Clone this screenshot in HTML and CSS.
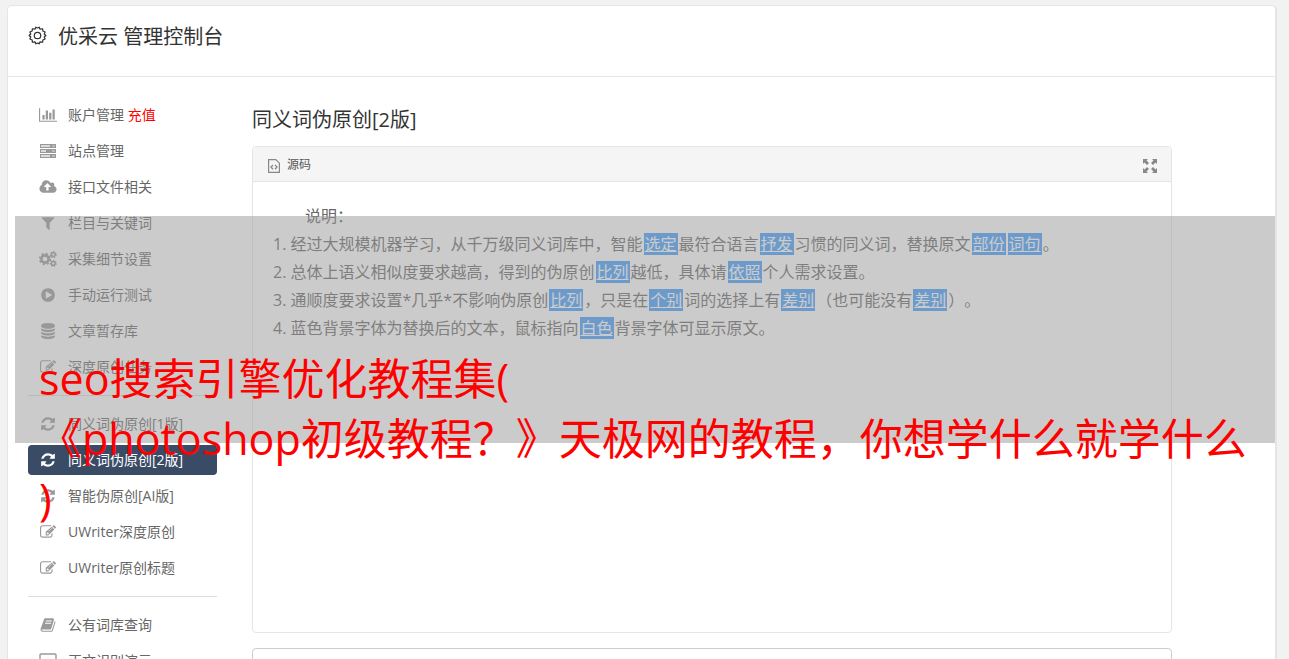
FILE: index.html
```html
<!DOCTYPE html>
<html lang="zh-CN">
<head>
    <meta charset="UTF-8">
    <meta name="viewport" content="width=device-width, initial-scale=1.0">
    <title>优采云 管理控制台</title>
    <link rel="stylesheet" href="styles.css">
</head>
<body>
    <!-- Icon set -->
    <svg class="icon-defs" width="0" height="0" aria-hidden="true">
        <symbol id="i-chart" viewBox="0 0 2048 1792"><path d="M640 896v512H384V896h256zm384-512v1024H768V384h256zm1024 1152v128H0V128h128v1408h1920zm-640-896v768h-256V640h256zm384-384v1152h-256V256h256z"/></symbol>
        <symbol id="i-server" viewBox="0 0 18 16"><path opacity=".35" d="M1 2h16v3H1zM1 6h16v4H1zM1 11h16v3H1z"/><path fill-rule="evenodd" d="M1 1h16v4H1zM2 2v2h9V2zM13 2.500v1h3v-1zM1 6h16v4H1zM2 7v2h5V7zM13 7.500v1h3v-1zM1 11h16v4H1zM2 12v2h9v-2zM13 12.500v1h3v-1z"/></symbol>
        <symbol id="i-cloud" viewBox="0 0 1920 1792"><path d="M1280 864q0-14-9-23L919 489q-9-9-23-9t-23 9L522 840q-10 12-10 24 0 14 9 23t23 9h224v352q0 13 9.500 22.500T800 1280h192q13 0 22.500-9.500t9.500-22.500V896h224q13 0 22.500-9.500T1280 864zm640 288q0 159-112.500 271.500T1536 1536H448q-185 0-316.500-131.500T0 1088q0-130 70-240t188-165q-2-30-2-43 0-212 150-362t362-150q156 0 285.500 87T1242 446q71-62 166-62 106 0 181 75t75 181q0 76-41 138 130 31 213.500 135.500T1920 1152z"/></symbol>
        <symbol id="i-filter" viewBox="0 0 1792 1792"><path d="M1595 295q17 41-14 70l-493 493v742q0 42-39 59-13 5-25 5-27 0-45-19l-256-256q-19-19-19-45V858L211 365q-31-29-14-70 17-39 59-39h1280q42 0 59 39z"/></symbol>
        <symbol id="i-cogs" viewBox="0 0 18 16"><g fill="none" stroke="currentColor"><circle cx="6" cy="8" r="3.600" stroke-width="2.600"/><circle cx="6" cy="8" r="5.300" stroke-width="1.800" stroke-dasharray="2.080 2.080"/><circle cx="14.300" cy="3.600" r="1.900" stroke-width="1.500"/><circle cx="14.300" cy="3.600" r="2.900" stroke-width="1.200" stroke-dasharray="1.300 1.300"/><circle cx="14.300" cy="12.400" r="1.900" stroke-width="1.500"/><circle cx="14.300" cy="12.400" r="2.900" stroke-width="1.200" stroke-dasharray="1.300 1.300"/></g></symbol>
        <symbol id="i-play" viewBox="0 0 1792 1792"><path d="M896 128q209 0 385.500 103T1561 510.500 1664 896t-103 385.500-279.500 279.500T896 1664t-385.500-103T231 1281.500 128 896t103-385.500T510.500 231 896 128zm384 823q32-18 32-55t-32-55L736 521q-31-19-64-1-32 19-32 56v640q0 37 32 56 16 8 32 8 17 0 32-9z"/></symbol>
        <symbol id="i-database" viewBox="0 0 1792 1792"><path d="M896 768q237 0 443-43t325-127v170q0 69-103 128t-280 93.500-385 34.500-385-34.500T231 896 128 768V598q119 84 325 127t443 43zm0 768q237 0 443-43t325-127v170q0 69-103 128t-280 93.500-385 34.500-385-34.500-280-93.500-103-128v-170q119 84 325 127t443 43zm0-384q237 0 443-43t325-127v170q0 69-103 128t-280 93.500-385 34.500-385-34.500-280-93.500-103-128V982q119 84 325 127t443 43zM896 0q208 0 385 34.500t280 93.500 103 128v128q0 69-103 128t-280 93.500T896 640t-385-34.500T231 512 128 384V256q0-69 103-128t280-93.500T896 0z"/></symbol>
        <symbol id="i-edit" viewBox="0 0 1792 1792"><path d="M888 1184l116-116-152-152-116 116v56h96v96h56zm440-720q-16-16-33 1L945 815q-17 17-1 33t33-1l350-350q17-17 1-33zm80 594v190q0 119-84.500 203.500T1120 1536H288q-119 0-203.500-84.500T0 1248V416q0-119 84.500-203.500T288 128h832q63 0 117 25 15 7 18 23 3 17-9 29l-49 49q-14 14-32 8-23-6-45-6H288q-66 0-113 47t-47 113v832q0 66 47 113t113 47h832q66 0 113-47t47-113v-126q0-13 9-22l64-64q15-15 35-7t20 29zm-96-738l288 288-672 672H640V864zm444 132l-92 92-288-288 92-92q28-28 68-28t68 28l152 152q28 28 28 68t-28 68z"/></symbol>
        <symbol id="i-refresh" viewBox="0 0 1792 1792"><path d="M1639 1056q0 5-1 7-64 268-268 434.500T892 1664q-146 0-282.500-55T366 1452l-129 129q-19 19-45 19t-45-19-19-45v-448q0-26 19-45t45-19h448q26 0 45 19t19 45-19 45l-137 137q71 66 161 102t187 36q134 0 250-65t186-179q11-17 53-117 8-23 30-23h192q13 0 22.500 9.500t9.500 22.500zm25-800v448q0 26-19 45t-45 19h-448q-26 0-45-19t-19-45 19-45l138-138Q1097 384 896 384q-134 0-250 65T460 628q-11 17-53 117-8 23-30 23H178q-13 0-22.500-9.500T146 736v-7q65-268 270-434.500T896 128q146 0 284 55.500T1425 340l130-129q19-19 45-19t45 19 19 45z"/></symbol>
        <symbol id="i-book" viewBox="0 0 1792 1792"><path d="M1703 478q40 57 18 129l-275 906q-19 64-76.500 107.500T1247 1664H324q-77 0-148.500-53.500T76 1479q-24-67-2-127 0-4 3-27t4-37q1-8-3-21.500t-3-19.500q2-11 8-21t16.500-23.500T116 1179q23-38 45-91.500t30-91.500q3-10 .5-30t-.5-28q3-11 17-28t17-23q21-36 42-92t25-90q1-9-2.500-32t.5-28q4-13 22-30.500t22-22.500q19-26 42.500-84.500T404 411q1-8-3-25.500t-2-26.500q2-8 9-18t18-23 17-21q8-12 16.500-30.500t15-35 16-36 19.500-32T533.500 140t36-11.500T617 134l-1 3q38-9 51-9h761q74 0 114 56t18 130l-274 906q-36 119-71.500 153.500T1086 1408H217q-27 0-38 15-11 16-1 43 24 70 144 70h923q29 0 56-15.500t35-41.500l300-987q7-22 5-57 38 15 59 43zm-1064 2q-4 13 2 22.500t20 9.500h608q13 0 25.500-9.500T1311 480l21-64q4-13-2-22.500t-20-9.500H702q-13 0-25.500 9.500T660 416zm-83 256q-4 13 2 22.500t20 9.500h608q13 0 25.500-9.500T1228 736l21-64q4-13-2-22.500t-20-9.500H619q-13 0-25.500 9.500T577 672z"/></symbol>
        <symbol id="i-screen" viewBox="0 0 18 16"><path fill="none" stroke="currentColor" stroke-width="1.400" d="M2 1h14q1 0 1 1v9q0 1-1 1H2q-1 0-1-1V2q0-1 1-1zM5 15h8"/></symbol>
        <symbol id="i-gear" viewBox="0 0 20 20"><g fill="none" stroke="currentColor" stroke-width="1.300" stroke-linejoin="round"><path d="M8.200 1.200Q10 2.600 11.800 1.200L12.700 3.300 15.400 2.900 15.600 5.200 18 6.300 17.100 8.400 18.800 10 17.100 11.600 18 13.700 15.600 14.800 15.400 17.100 12.700 16.700 11.800 18.800Q10 17.400 8.200 18.800L7.300 16.700 4.600 17.100 4.400 14.800 2 13.700 2.900 11.600 1.200 10 2.900 8.400 2 6.300 4.400 5.200 4.600 2.900 7.300 3.300z"/><circle cx="10" cy="10" r="3.400"/></g></symbol>
        <symbol id="i-source" viewBox="0 0 12 14"><g fill="none" stroke="currentColor"><path stroke-width="1.200" d="M.6.6h7.200l3.600 3.600v9.200H.6z"/><path stroke-width="1.300" d="M5 6L3 8l2 2.200M7 6l2 2-2 2.200"/></g></symbol>
        <symbol id="i-expand" viewBox="0 0 14 14"><path d="M0 0h5L3.500 1.500 6 4 4 6 1.500 3.500 0 5zM14 0v5l-1.500-1.500L10 6 8 4l2.500-2.500L9 0zM0 14V9l1.500 1.500L4 8l2 2-2.500 2.500L5 14zM14 14H9l1.500-1.500L8 10l2-2 2.500 2.500L14 9z"/></symbol>
    </svg>

    <div class="panel">
        <header class="panel-header">
            <svg class="gear"><use href="#i-gear"/></svg>
            <h1>优采云 管理控制台</h1>
        </header>

        <div class="panel-body">
            <nav class="sidebar">
                <a class="nav-item" href="#"><svg class="icon"><use href="#i-chart"/></svg><span>账户管理 <em class="recharge">充值</em></span></a>
                <a class="nav-item" href="#"><svg class="icon"><use href="#i-server"/></svg><span>站点管理</span></a>
                <a class="nav-item" href="#"><svg class="icon"><use href="#i-cloud"/></svg><span>接口文件相关</span></a>
                <a class="nav-item" href="#"><svg class="icon"><use href="#i-filter"/></svg><span>栏目与关键词</span></a>
                <a class="nav-item" href="#"><svg class="icon"><use href="#i-cogs"/></svg><span>采集细节设置</span></a>
                <a class="nav-item" href="#"><svg class="icon"><use href="#i-play"/></svg><span>手动运行测试</span></a>
                <a class="nav-item" href="#"><svg class="icon"><use href="#i-database"/></svg><span>文章暂存库</span></a>
                <a class="nav-item" href="#"><svg class="icon"><use href="#i-edit"/></svg><span>深度原创任务</span></a>
                <hr>
                <a class="nav-item" href="#"><svg class="icon"><use href="#i-refresh"/></svg><span>同义词伪原创[1版]</span></a>
                <a class="nav-item active" href="#"><svg class="icon"><use href="#i-refresh"/></svg><span>同义词伪原创[2版]</span></a>
                <a class="nav-item" href="#"><svg class="icon"><use href="#i-refresh"/></svg><span>智能伪原创[AI版]</span></a>
                <a class="nav-item" href="#"><svg class="icon"><use href="#i-edit"/></svg><span>UWriter深度原创</span></a>
                <a class="nav-item" href="#"><svg class="icon"><use href="#i-edit"/></svg><span>UWriter原创标题</span></a>
                <hr>
                <a class="nav-item" href="#"><svg class="icon"><use href="#i-book"/></svg><span>公有词库查询</span></a>
                <a class="nav-item" href="#"><svg class="icon"><use href="#i-screen"/></svg><span>正文识别演示</span></a>
            </nav>

            <main class="content">
                <h2>同义词伪原创[2版]</h2>

                <section class="editor">
                    <div class="toolbar">
                        <button type="button" class="tool"><svg class="source-icon"><use href="#i-source"/></svg>源码</button>
                        <button type="button" class="tool" aria-label="全屏"><svg class="expand-icon"><use href="#i-expand"/></svg></button>
                    </div>
                    <div class="editor-body">
                        <p>说明：</p>
                        <ol>
                            <li>经过大规模机器学习，从千万级同义词库中，智能<u>选定</u>最符合语言<u>抒发</u>习惯的同义词，替换原文<u>部份</u><u>词句</u>。</li>
                            <li>总体上语义相似度要求越高，得到的伪原创<u>比列</u>越低，具体请<u>依照</u>个人需求设置。</li>
                            <li>通顺度要求设置*几乎*不影响伪原创<u>比列</u>，只是在<u>个别</u>词的选择上有<u>差别</u>（也可能没有<u>差别</u>）。</li>
                            <li>蓝色背景字体为替换后的文本，鼠标指向<u>白色</u>背景字体可显示原文。</li>
                        </ol>
                    </div>
                </section>

                <section class="result"></section>
            </main>
        </div>
    </div>

    <!-- Caption over the page -->
    <div class="caption">
        <p>seo搜索引擎优化教程集(<br>《photoshop初级教程？》天极网的教程，你想学什么就学什么<br>)</p>
    </div>
</body>
</html>
```

FILE: styles.css
```css
* {
    margin: 0;
    padding: 0;
    box-sizing: border-box;
}

body {
    position: relative;
    height: 100vh;
    overflow: hidden;
    background: #f2f2f2;
    color: #666;
    font-family: "Open Sans", "Noto Sans CJK SC", sans-serif;
    font-size: 14px;
    text-spacing-trim: space-all;
}

.icon-defs {
    position: absolute;
}

svg {
    fill: currentColor;
    flex: none;
}

.panel {
    margin: 5px 12px 0 7px;
    background: #fff;
    border: 1px solid #e5e5e5;
    border-right-width: 2px;
    border-radius: 5px 5px 0 0;
}

.panel-header {
    display: flex;
    align-items: flex-start;
    gap: 11px;
    padding: 16px 20px 24px;
    border-bottom: 1px solid #e5e5e5;
    color: #333;
}

.panel-header h1,
.content h2 {
    font-size: 20px;
    font-weight: 400;
    line-height: 30px;
    color: #333;
}

.gear {
    width: 19px;
    height: 19px;
    margin-top: 4px;
}

.panel-body {
    display: flex;
    gap: 35px;
    padding: 23px 103px 20px 20px;
}

/* Sidebar */
.sidebar {
    display: flex;
    flex: none;
    flex-direction: column;
    gap: 6px;
    width: 189px;
}

.sidebar hr {
    margin: 7px 0;
    border: 0;
    border-top: 1px solid #ddd;
}

.nav-item {
    display: flex;
    align-items: center;
    gap: 11px;
    height: 30px;
    padding: 0 11px;
    border-radius: 4px;
    color: #666;
    line-height: 30px;
    text-decoration: none;
    white-space: nowrap;
}

.nav-item.active {
    background: #3a4b66;
    color: #fff;
}

.icon {
    width: 18px;
    height: 16px;
    color: #999;
}

.active .icon {
    color: #fff;
}

.recharge {
    color: #f00;
    font-style: normal;
}

/* Content */
.content {
    flex: 1;
    min-width: 0;
}

.content h2 {
    margin: 5px 0 11px;
}

.editor,
.result {
    border: 1px solid #e5e5e5;
    border-radius: 4px;
}

.toolbar {
    display: flex;
    align-items: center;
    justify-content: space-between;
    height: 35px;
    padding: 0 14px 0 15px;
    background: #f5f5f5;
    border-bottom: 1px solid #e5e5e5;
    border-radius: 4px 4px 0 0;
}

.tool {
    display: flex;
    align-items: center;
    gap: 7px;
    border: 0;
    background: none;
    color: #555;
    font-family: inherit;
    font-size: 12px;
    cursor: pointer;
}

.tool svg {
    margin-top: 3px;
    color: #888;
}

.source-icon {
    width: 12px;
    height: 14px;
}

.expand-icon {
    width: 14px;
    height: 14px;
}

.editor-body {
    min-height: 450px;
    padding: 20px;
    font-size: 16px;
    line-height: 28px;
}

.editor-body p {
    text-indent: 2em;
}

.editor-body ol {
    list-style-position: inside;
}

.editor-body u {
    margin: 0 1px;
    padding: 0 1px;
    background: #409eff;
    color: #fff;
    text-decoration-skip-ink: none;
}

.result {
    min-height: 200px;
    margin-top: 15px;
    border-color: #ccc;
}

/* Caption band */
.caption {
    position: absolute;
    top: 216px;
    left: 15px;
    right: 14px;
    height: 227px;
    padding: 133px 0 0 24px;
    background: rgba(151, 151, 151, 0.5);
}

.caption p {
    color: #f00;
    font-size: 43px;
    line-height: 60px;
    white-space: nowrap;
}
```
